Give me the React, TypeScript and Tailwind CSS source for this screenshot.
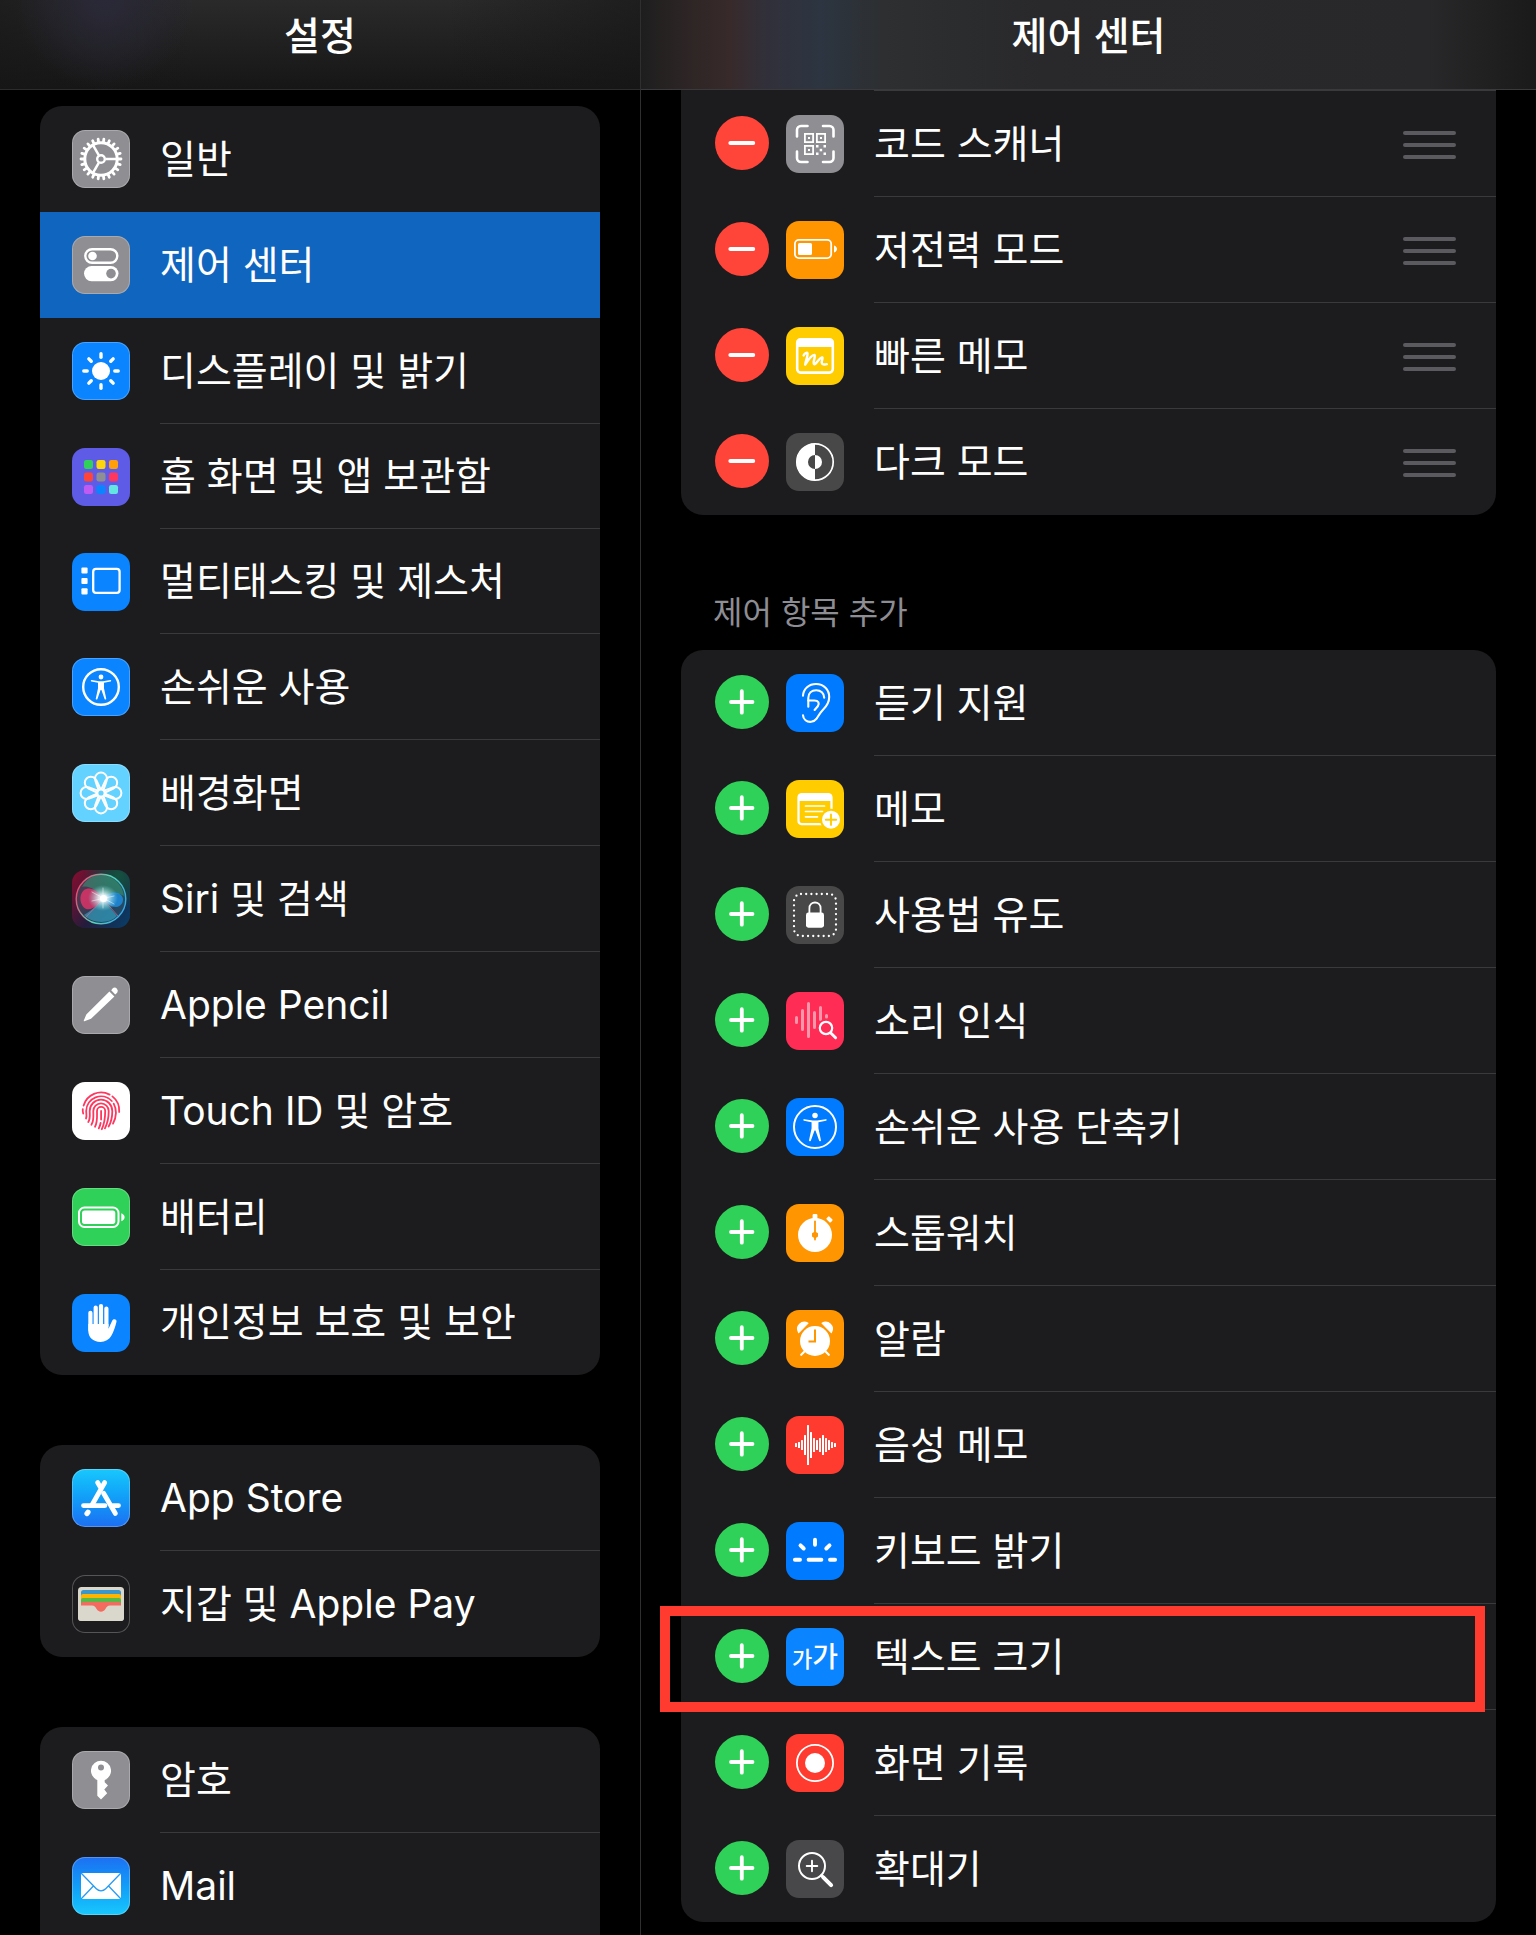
import type { ReactNode } from "react";
import clsx from "clsx";

type MenuItem = {
  label: string;
  icon: ReactNode;
  selected?: boolean;
  noDivider?: boolean;
  tight?: boolean;
};

type ControlItem = {
  label: string;
  icon: ReactNode;
  highlighted?: boolean;
};

// Every icon is a 58px rounded tile with a drawing on top
function Tile({ bg, rim, children }: { bg: string; rim?: boolean; children: ReactNode }) {
  return (
    <span className={clsx("block size-[58px] shrink-0 overflow-hidden rounded-[13px]", bg, rim && "inset-ring inset-ring-white/25")}>
      {children}
    </span>
  );
}

function Glyph({ children }: { children: ReactNode }) {
  return (
    <svg viewBox="0 0 58 58" className="size-full" fill="none" stroke="white" strokeLinecap="round" strokeLinejoin="round" aria-hidden="true">
      {children}
    </svg>
  );
}

const range = (n: number) => Array.from({ length: n }, (_, i) => i);

function GearGlyph() {
  return (
    <Glyph>
      <circle cx="29" cy="29" r="16.2" strokeWidth="3" />
      <circle cx="29" cy="29" r="3.8" strokeWidth="2.4" />
      {range(22).map((i) => (
        <path key={i} d="M46 29h3" strokeWidth="2.8" transform={`rotate(${(i * 360) / 22} 29 29)`} />
      ))}
      {[0, 120, 240].map((deg) => (
        <path key={deg} d="M33.5 29H45" strokeWidth="2.5" strokeLinecap="butt" transform={`rotate(${deg} 29 29)`} />
      ))}
    </Glyph>
  );
}

function TogglesGlyph() {
  return (
    <Glyph>
      <rect x="13.3" y="13.2" width="32" height="13.6" rx="6.8" strokeWidth="2.4" />
      <circle cx="20.5" cy="20" r="4.3" fill="white" stroke="none" />
      <rect x="12" y="30" width="34.5" height="15.2" rx="7.6" fill="white" stroke="none" />
      <circle cx="39" cy="37.6" r="4.8" fill="#8e8e93" stroke="none" />
    </Glyph>
  );
}

function SunGlyph() {
  return (
    <Glyph>
      <circle cx="29" cy="29" r="9" fill="white" stroke="none" />
      {range(8).map((i) => (
        <path key={i} d="M29 11.8v3.4" strokeWidth="3.4" transform={`rotate(${i * 45} 29 29)`} />
      ))}
    </Glyph>
  );
}

const gridColors = ["#30d158", "#ffd60a", "#ff9f0a", "#ff453a", "#8e8e93", "#ff375f", "#bf5af2", "#0a84ff", "#63e6e2"];

function HomeGridGlyph() {
  return (
    <Glyph>
      {gridColors.map((c, i) => (
        <rect key={c} x={12 + (i % 3) * 12.5} y={12 + Math.floor(i / 3) * 12.5} width="9" height="9" rx="2.2" fill={c} stroke="none" />
      ))}
    </Glyph>
  );
}

function MultitaskGlyph() {
  return (
    <Glyph>
      {[14.4, 24.9, 35.2].map((y) => (
        <rect key={y} x="9.4" y={y} width="6.2" height="6.2" rx="1" fill="white" stroke="none" />
      ))}
      <rect x="21.2" y="15.9" width="26.4" height="24" rx="2.8" strokeWidth="2.3" />
    </Glyph>
  );
}

function PersonGlyph({ big }: { big?: boolean }) {
  return (
    <Glyph>
      <circle cx="29" cy="29" r={big ? 21 : 17.8} strokeWidth={big ? 2 : 2.4} />
      <g transform={big ? "translate(29 29) scale(1.14) translate(-29 -29)" : undefined}>
        <circle cx="29" cy="19" r="2.4" fill="white" stroke="none" />
        <path
          d="M19.6 22.1 27 23.2h4l7.4-1.1a.7.7 0 0 1 .2 1.4l-6.6 1.3v5.4l2.2 10.2a.8.8 0 0 1-1.6.5L29.4 32h-.8l-3.2 8.9a.8.8 0 0 1-1.6-.5L26 30.2v-5.4l-6.6-1.3a.7.7 0 0 1 .2-1.4Z"
          fill="white"
          stroke="none"
        />
      </g>
    </Glyph>
  );
}

function FlowerGlyph() {
  return (
    <Glyph>
      {range(8).map((i) => (
        <path
          key={i}
          d="M26.4 25.6C25.6 22 23 18 23 14.6a6 6 0 0 1 12 0c0 3.4-2.6 7.4-3.4 11"
          strokeWidth="2"
          transform={`rotate(${i * 45} 29 29)`}
        />
      ))}
      <circle cx="29" cy="29" r="3.6" strokeWidth="2" />
    </Glyph>
  );
}

function SiriGlyph() {
  return (
    <Glyph>
      <defs>
        <linearGradient id="siriBack" x1="0" y1="0.2" x2="1" y2="0.8">
          <stop offset="0" stopColor="#7a0f30" />
          <stop offset="0.5" stopColor="#231c3c" />
          <stop offset="1" stopColor="#0b3a63" />
        </linearGradient>
        <radialGradient id="siriGreen" cx="0.8" cy="0.1" r="0.6">
          <stop offset="0" stopColor="#14523f" />
          <stop offset="1" stopColor="#14523f" stopOpacity="0" />
        </radialGradient>
        <linearGradient id="siriRing" x1="0" y1="0.3" x2="1" y2="0.7">
          <stop offset="0" stopColor="#f0486e" />
          <stop offset="0.5" stopColor="#57d5b4" />
          <stop offset="1" stopColor="#35a7e8" />
        </linearGradient>
        <radialGradient id="siriGlow">
          <stop offset="0" stopColor="#ffffff" />
          <stop offset="0.3" stopColor="#eafcff" stopOpacity="0.85" />
          <stop offset="1" stopColor="#7fe0e0" stopOpacity="0" />
        </radialGradient>
      </defs>
      <g stroke="none">
        <rect width="58" height="58" fill="url(#siriBack)" />
        <rect width="58" height="58" fill="url(#siriGreen)" />
        <circle cx="29" cy="29" r="24.5" fill="#3b6f7d" fillOpacity="0.4" />
        <path d="M29 5a24 24 0 0 1 23 21C44 21 36 25 31 28 26 21 17 15 10 17 14 9 21 5 29 5Z" fill="#3aa07a" fillOpacity="0.5" />
        <path d="M31 30C26 35 20 40 12 45 20 54 38 54 45 46 40 40 35 34 31 30Z" fill="#35b7d8" fillOpacity="0.55" />
        <path d="M31 29C26 20 18 16 12 20 6 25 8 36 14 39 21 41 26 34 31 29Z" fill="#f0336a" fillOpacity="0.75" />
        <path d="M31 29C36 22 45 20 50 26 53 31 49 37 44 37 38 37 34 32 31 29Z" fill="#1e8fe6" fillOpacity="0.8" />
      </g>
      <path d="M31 29 46 46M31 29 14 47" stroke="#d06a95" strokeOpacity="0.7" strokeWidth="1" />
      <circle cx="29" cy="29" r="24.8" stroke="url(#siriRing)" strokeWidth="1.4" />
      <ellipse cx="31" cy="28" rx="15" ry="13" fill="url(#siriGlow)" stroke="none" />
      <path d="M20 22 42 34M31 18v20M20 31l22-5" strokeWidth="0.7" strokeOpacity="0.7" />
      <circle cx="31.5" cy="28.5" r="3.6" fill="white" stroke="none" />
    </Glyph>
  );
}

function PencilGlyph() {
  return (
    <Glyph>
      <path d="M11 45.2c-.5.3-.8 0-.6-.6l2.5-6.2L36 15.5l5 4.9L17.6 42.8Z" fill="white" stroke="none" transform="translate(1.4 0)" />
      <path d="M39.2 14.2 41 12a3.3 3.3 0 0 1 4.2 4.8l-2 1.6Z" fill="white" stroke="none" />
    </Glyph>
  );
}

function FingerprintGlyph() {
  return (
    <Glyph>
      <g stroke="#ff375f" strokeWidth="1.8">
        <path d="M11.6 23.6A18.2 18.2 0 0 1 37.6 12.6" />
        <path d="M40.4 14.4A18.2 18.2 0 0 1 47.2 30" />
        <path d="M10.8 27.2c-.2 1.6 0 3 .4 4.4" />
        <path d="M14 36.5c1-2 .2-5.500.2-7.5a14.8 14.8 0 0 1 25.6-10" />
        <path d="M41.7 21.6c3 5.6 2.7 13.4-.7 20" />
        <path d="M16.3 40c2.2-3.4 1.4-7.5 1.4-11a11.3 11.3 0 0 1 22.6 0c0 6.5-1 11-3.7 15.500" />
        <path d="M19.4 42.7c2.8-4.2 1.9-9 1.9-13.7a7.7 7.7 0 0 1 15.4 0c0 7-1 12-3.8 17.3" />
        <path d="M23 44.8c2.7-4.8 2-10.8 2-15.8a4.1 4.1 0 0 1 8.2 0c0 6.5-.7 12.5-3.4 18.2" />
        <path d="M29.1 29v8.5M28.6 41c-.3 2-.9 3.7-1.800 5.4" />
      </g>
    </Glyph>
  );
}

function BatteryGlyph() {
  return (
    <Glyph>
      <rect x="7" y="19.5" width="39.5" height="19.5" rx="5.5" strokeWidth="2" />
      <rect x="10" y="22.6" width="33.3" height="13.3" rx="2.6" fill="white" stroke="none" />
      <path d="M49.3 25.3c4.4 1.6 4.4 6.4 0 8Z" fill="white" stroke="none" />
    </Glyph>
  );
}

function HandGlyph() {
  return (
    <Glyph>
      <path d="M18.4 18.8V36M23.7 13.5V32M29 12v20M34.4 14.5V32" strokeWidth="4.2" />
      <path
        d="M16.3 30h20.2v4.8c1.2-2.5 2.6-6 3.8-8.3 1.2-2.2 4.8-1.3 4.2 1.2-1 4.5-2.9 10-5.3 14.4-2.2 3.9-6 5.8-10.7 5.8-7.6 0-12.2-4.5-12.2-11.4Z"
        fill="white"
        stroke="none"
      />
    </Glyph>
  );
}

function AppStoreGlyph() {
  return (
    <Glyph>
      <g strokeWidth="4.8">
        <path d="M32.7 13.5 20 36" />
        <path d="M25.6 13.5 28 17.6" />
        <path d="M31.6 24.2 43.4 44.5" />
        <path d="M11.5 36.6H33M41 36.6h5.5" />
        <path d="M16 43.2 15 44.6" strokeWidth="5.2" />
      </g>
    </Glyph>
  );
}

function WalletGlyph() {
  return (
    <Glyph>
      <g stroke="none">
        <rect x="6" y="12" width="46" height="34" rx="3.5" fill="#dad7cc" />
        <path d="M9 17.5a2.5 2.5 0 0 1 2.5-2.5h35a2.5 2.5 0 0 1 2.5 2.5V34H9Z" fill="#3b97c9" />
        <path d="M9 21a2 2 0 0 1 2-2h36a2 2 0 0 1 2 2v13H9Z" fill="#ffb400" />
        <path d="M9 25a2 2 0 0 1 2-2h36a2 2 0 0 1 2 2v9H9Z" fill="#57b947" />
        <path d="M9 29a2 2 0 0 1 2-2h36a2 2 0 0 1 2 2v9H9Z" fill="#f26b5e" />
        <path d="M6 30.5h14c2.5 0 3.3 1.5 4.6 3.5 2.3 3.6 6.5 3.6 8.8 0 1.3-2 2.1-3.5 4.6-3.5h14v12a3.5 3.5 0 0 1-3.5 3.5h-39A3.5 3.5 0 0 1 6 42.5Z" fill="#dad7cc" />
      </g>
    </Glyph>
  );
}

function KeyGlyph() {
  return (
    <Glyph>
      <path
        d="M29 9.8a10 10 0 0 1 3.7 19.3v2.1l3.3 3.3-3.7 4 2.9 3.8-6.2 6.3-3.7-3.9V29.1A10 10 0 0 1 29 9.8Zm0 3.7a3 3 0 1 0 0 6 3 3 0 0 0 0-6Z"
        fill="white"
        fillRule="evenodd"
        stroke="none"
      />
    </Glyph>
  );
}

function MailGlyph() {
  return (
    <Glyph>
      <rect x="9" y="16" width="40" height="26" rx="1.5" fill="white" stroke="none" />
      <path d="M9.5 16.5 24.3 31.8c2.7 2.7 6.7 2.7 9.4 0L48.5 16.5M9.5 41.5 21.4 29M48.5 41.5 36.6 29" stroke="#2a9bf5" strokeWidth="1.3" />
    </Glyph>
  );
}

function QrGlyph() {
  return (
    <Glyph>
      <path d="M11 21.5V15a4 4 0 0 1 4-4h6.5M37 11h6.5a4 4 0 0 1 4 4v6.5M47.5 36.5V43a4 4 0 0 1-4 4H37M21.5 47H15a4 4 0 0 1-4-4v-6.5" strokeWidth="2.6" />
      {[[18, 18], [30, 18], [18, 30]].map(([x, y]) => (
        <g key={`${x}-${y}`}>
          <rect x={x + 0.9} y={y + 0.9} width="8.2" height="8.2" strokeWidth="1.8" strokeLinejoin="miter" />
          <rect x={x + 4} y={y + 4} width="2" height="2" fill="white" stroke="none" />
        </g>
      ))}
      {[[30, 30], [37.5, 30], [33.7, 33.8], [30, 37.5], [37.5, 37.5]].map(([x, y]) => (
        <rect key={`${x}-${y}`} x={x} y={y} width="2.5" height="2.5" fill="white" stroke="none" />
      ))}
    </Glyph>
  );
}

function LowPowerGlyph() {
  return (
    <Glyph>
      <rect x="8.9" y="18.9" width="36.3" height="18.2" rx="4" strokeWidth="1.8" />
      <rect x="12" y="22" width="14" height="12" rx="1.5" fill="white" stroke="none" />
      <path d="M48 24.5c4 1.2 4 5.8 0 7Z" fill="white" stroke="none" />
    </Glyph>
  );
}

function QuickNoteGlyph() {
  return (
    <Glyph>
      <rect x="11.2" y="12.2" width="35.6" height="33.4" rx="3.5" strokeWidth="2.6" />
      <path d="M11 13h36v7H11Z" fill="white" stroke="none" />
      <path
        d="M17.6 28.4c.8-1.8 3.8-4.2 4-1.8.1 3-2 7.400-2.400 11 2.500-4 6.600-10 9.200-9.600 1.800.5-1.800 6.800-.5 9 1.600 1.700 6-7.200 8.300-6.600 1.500.7-2 5 .2 6.500 1.300.8 2.900.7 4.400.3"
        strokeWidth="2.4"
      />
    </Glyph>
  );
}

function DarkModeGlyph() {
  return (
    <Glyph>
      <circle cx="29" cy="29" r="18.2" strokeWidth="1.7" />
      <path d="M29 10.5a18.5 18.5 0 0 0 0 37V36a7 7 0 0 1 0-14Z" fill="white" stroke="none" />
      <path d="M29 22a7 7 0 0 1 0 14Z" fill="white" stroke="none" />
    </Glyph>
  );
}

function EarGlyph() {
  return (
    <Glyph>
      <g strokeWidth="2.1">
        <path d="M17 21.8C17.4 14.6 23 10 30 10c7.7 0 13.2 5.4 13.2 13 0 5.5-2.7 9.3-6.2 12.7-3.2 3.2-4.5 6.3-6.4 9-2.7 3.7-8 4-11.1 1.5A6.5 6.5 0 0 1 17 41.3" />
        <path d="M38.2 23.8c0-4.6-3.5-7.6-8-7.6s-7.9 3-7.9 7.8v8.7" />
        <path d="M22.3 26.5h6c4.2 0 5.5 2.9 3.5 5.8L28.6 36" />
      </g>
    </Glyph>
  );
}

function MemoGlyph() {
  return (
    <Glyph>
      <rect x="12.5" y="14.2" width="33" height="30" rx="3.3" strokeWidth="2.3" />
      <path d="M12.5 14.5h33v6.4h-33Z" fill="white" stroke="none" />
      <path d="M19.5 26h19M19.5 31.5h17M19.5 36.8h12" strokeWidth="1.7" />
      <circle cx="45" cy="39.7" r="10" fill="white" stroke="#ffcc00" strokeWidth="2" />
      <path d="M45 34.5v10.4M39.8 39.7h10.4" stroke="#ffcc00" strokeWidth="1.9" />
    </Glyph>
  );
}

function LockGlyph() {
  return (
    <Glyph>
      <rect x="8" y="8" width="42" height="42" rx="7" strokeWidth="2.3" strokeDasharray="0 5.2" />
      <rect x="20" y="26.5" width="18" height="15.2" rx="2.4" fill="white" stroke="none" />
      <path d="M23.4 27v-4.5c0-8 11.2-8 11.2 0V27" strokeWidth="1.8" />
    </Glyph>
  );
}

function SoundGlyph() {
  return (
    <Glyph>
      <path d="M10.5 25.5v5M16.5 18.5v19M22.5 11.5v33M28.5 20.5v15M34.5 15.5v12M40.5 23.5v1.5" stroke="#ff96aa" strokeWidth="3" />
      <circle cx="40" cy="36" r="9" fill="#ff2d55" stroke="none" />
      <circle cx="40" cy="36" r="6.2" strokeWidth="2.2" />
      <path d="m44.8 41 4.8 4.8" strokeWidth="2.9" />
    </Glyph>
  );
}

function StopwatchGlyph() {
  return (
    <Glyph>
      <circle cx="29" cy="31" r="17" fill="white" stroke="none" />
      <rect x="26.6" y="10" width="4.8" height="6" rx="1" fill="white" stroke="none" />
      <rect x="40.6" y="13.4" width="5.8" height="4" rx="1" fill="white" stroke="none" transform="rotate(45 43.5 15.4)" />
      <path d="M29 17.5v18" stroke="#ff9500" strokeWidth="1.8" />
      <path d="m29 27.4 3 1.8v3.4l-3 2-3-2v-3.4Z" fill="#ff9500" stroke="none" />
    </Glyph>
  );
}

function AlarmGlyph() {
  return (
    <Glyph>
      <circle cx="29" cy="31" r="15" fill="white" stroke="none" />
      <path d="M12.7 22.6a6.8 6.8 0 0 1 9.3-9.4ZM45.3 22.6a6.8 6.8 0 0 0-9.3-9.4Z" fill="white" strokeWidth="1.2" />
      <path d="m15.2 44.8 4-4M42.8 44.8l-4-4" strokeWidth="2.2" />
      <path d="M29 19.5v12h-6.5" stroke="#ff9500" strokeWidth="2" strokeLinecap="butt" strokeLinejoin="miter" />
    </Glyph>
  );
}

const voiceBars = [4, 6, 10, 20, 40, 26, 14, 10, 14, 20, 14, 10, 6, 4];

function VoiceGlyph() {
  return (
    <Glyph>
      {voiceBars.map((h, i) => (
        <rect key={i} x={9 + i * 3} y={29 - h / 2} width="2" height={h} rx="0.5" fill="white" stroke="none" />
      ))}
    </Glyph>
  );
}

function KeyboardLightGlyph() {
  return (
    <Glyph>
      <path d="M8.9 37.7H14M22.6 37.7h12.8M44 37.7h5.1M29 17.8v5M14.5 23.3l3.2 3.2M43.5 23.3l-3.2 3.2" strokeWidth="3.9" />
    </Glyph>
  );
}

function TextSizeGlyph() {
  return (
    <span className="flex size-full items-baseline justify-center pt-1 leading-[50px] font-medium text-white" aria-hidden="true">
      <span className="text-[22px]">가</span>
      <span className="text-[28px]">가</span>
    </span>
  );
}

function RecordGlyph() {
  return (
    <Glyph>
      <circle cx="29" cy="29" r="18.1" strokeWidth="1.8" />
      <circle cx="29" cy="29" r="10" fill="white" stroke="none" />
    </Glyph>
  );
}

function MagnifierGlyph() {
  return (
    <Glyph>
      <circle cx="26" cy="26" r="13" strokeWidth="2" />
      <path d="M26 20.7v10.6M20.7 26h10.6" strokeWidth="1.9" />
      <path d="m35.5 35.5 1 1" strokeWidth="3" />
      <path d="m37.3 37.3 7.8 7.9" strokeWidth="4" />
    </Glyph>
  );
}

const menuGroups: MenuItem[][] = [
  [
    { label: "일반", icon: <Tile rim bg="bg-[#8e8e93]"><GearGlyph /></Tile>, noDivider: true },
    { label: "제어 센터", icon: <Tile rim bg="bg-[#8e8e93]"><TogglesGlyph /></Tile>, selected: true, noDivider: true },
    { label: "디스플레이 및 밝기", icon: <Tile rim bg="bg-[#0a84ff]"><SunGlyph /></Tile> },
    { label: "홈 화면 및 앱 보관함", icon: <Tile bg="bg-[#5e5ce6]"><HomeGridGlyph /></Tile>, tight: true },
    { label: "멀티태스킹 및 제스처", icon: <Tile bg="bg-[#0a84ff]"><MultitaskGlyph /></Tile>, tight: true },
    { label: "손쉬운 사용", icon: <Tile rim bg="bg-[#0a84ff]"><PersonGlyph /></Tile> },
    { label: "배경화면", icon: <Tile rim bg="bg-[#64d2ff]"><FlowerGlyph /></Tile> },
    { label: "Siri 및 검색", icon: <Tile bg="bg-[#231c3c]"><SiriGlyph /></Tile> },
    { label: "Apple Pencil", icon: <Tile rim bg="bg-[#8e8e93]"><PencilGlyph /></Tile> },
    { label: "Touch ID 및 암호", icon: <Tile bg="bg-white"><FingerprintGlyph /></Tile> },
    { label: "배터리", icon: <Tile rim bg="bg-[#30d158]"><BatteryGlyph /></Tile> },
    { label: "개인정보 보호 및 보안", icon: <Tile bg="bg-[#0a84ff]"><HandGlyph /></Tile>, tight: true, noDivider: true },
  ],
  [
    { label: "App Store", icon: <Tile rim bg="bg-linear-to-b from-[#1ac8fc] to-[#1d6ff2]"><AppStoreGlyph /></Tile> },
    { label: "지갑 및 Apple Pay", icon: <Tile rim bg="bg-[#1c1c1e]"><WalletGlyph /></Tile>, noDivider: true },
  ],
  [
    { label: "암호", icon: <Tile rim bg="bg-[#8e8e93]"><KeyGlyph /></Tile> },
    { label: "Mail", icon: <Tile rim bg="bg-linear-to-b from-[#1d6ff2] to-[#1ac8fc]"><MailGlyph /></Tile> },
  ],
];

const includedControls: ControlItem[] = [
  { label: "코드 스캐너", icon: <Tile bg="bg-[#8e8e93]"><QrGlyph /></Tile> },
  { label: "저전력 모드", icon: <Tile bg="bg-[#ff9500]"><LowPowerGlyph /></Tile> },
  { label: "빠른 메모", icon: <Tile bg="bg-[#ffcc00]"><QuickNoteGlyph /></Tile> },
  { label: "다크 모드", icon: <Tile bg="bg-[#484848]"><DarkModeGlyph /></Tile> },
];

const moreControls: ControlItem[] = [
  { label: "듣기 지원", icon: <Tile bg="bg-[#007aff]"><EarGlyph /></Tile> },
  { label: "메모", icon: <Tile bg="bg-[#ffcc00]"><MemoGlyph /></Tile> },
  { label: "사용법 유도", icon: <Tile bg="bg-[#484848]"><LockGlyph /></Tile> },
  { label: "소리 인식", icon: <Tile bg="bg-[#ff2d55]"><SoundGlyph /></Tile> },
  { label: "손쉬운 사용 단축키", icon: <Tile bg="bg-[#007aff]"><PersonGlyph big /></Tile> },
  { label: "스톱워치", icon: <Tile bg="bg-[#ff9500]"><StopwatchGlyph /></Tile> },
  { label: "알람", icon: <Tile bg="bg-[#ff9500]"><AlarmGlyph /></Tile> },
  { label: "음성 메모", icon: <Tile bg="bg-[#ff3b30]"><VoiceGlyph /></Tile> },
  { label: "키보드 밝기", icon: <Tile bg="bg-[#007aff]"><KeyboardLightGlyph /></Tile> },
  { label: "텍스트 크기", icon: <Tile bg="bg-[#0a84ff]"><TextSizeGlyph /></Tile>, highlighted: true },
  { label: "화면 기록", icon: <Tile bg="bg-[#ff3b30]"><RecordGlyph /></Tile> },
  { label: "확대기", icon: <Tile bg="bg-[#48484a]"><MagnifierGlyph /></Tile> },
];

function MenuRow({ item }: { item: MenuItem }) {
  return (
    <li>
      <a
        href="#"
        aria-current={item.selected ? "page" : undefined}
        className={clsx("flex pl-8", item.tight ? "h-[105px]" : "h-[106px]", item.selected && "bg-[#1065be]")}
      >
        <span className="pt-6">{item.icon}</span>
        <span
          className={clsx(
            "ml-[30px] flex flex-1 items-center border-b whitespace-nowrap",
            item.noDivider ? "border-transparent" : "border-[#3a3a3c]"
          )}
        >
          {item.label}
        </span>
      </a>
    </li>
  );
}

function ControlRow({ item, mode, last }: { item: ControlItem; mode: "add" | "remove"; last: boolean }) {
  const adding = mode === "add";
  return (
    <li className="relative flex h-[106px] items-center pl-[34px]">
      <button
        type="button"
        aria-label={`${item.label} ${adding ? "추가" : "제거"}`}
        className={clsx("mb-0.5 size-[54px] shrink-0 rounded-full", adding ? "bg-[#30d158]" : "bg-[#ff453a]")}
      >
        <svg viewBox="0 0 54 54" fill="none" stroke="white" strokeWidth="3.8" strokeLinecap="round" aria-hidden="true">
          <path d={adding ? "M16 27h21.500M26.800 16.200v21.500" : "M15.300 27h23"} />
        </svg>
      </button>
      <span className="ml-[17px]">{item.icon}</span>
      <span
        className={clsx(
          "ml-[30px] flex h-full flex-1 items-center justify-between border-b pr-10",
          last ? "border-transparent" : "border-[#3a3a3c]"
        )}
      >
        <span className="whitespace-nowrap">{item.label}</span>
        {!adding && (
          <button type="button" aria-label={`${item.label} 순서 변경`} className="mt-0.5 flex w-[53px] flex-col gap-2">
            <span className="h-1 rounded-full bg-[#5a5a5f]" />
            <span className="h-1 rounded-full bg-[#5a5a5f]" />
            <span className="h-1 rounded-full bg-[#5a5a5f]" />
          </button>
        )}
      </span>
      {item.highlighted && (
        <span className="pointer-events-none absolute top-[2px] right-[11px] left-[-21px] h-[106px] border-10 border-[#ff3b30]" />
      )}
    </li>
  );
}

export default function App() {
  return (
    <div className="flex h-screen overflow-hidden bg-black font-['Inter','Noto_Sans_CJK_KR',sans-serif] text-[39px] leading-[58px] text-white">
      {/* Menu */}
      <aside className="flex w-5/12 flex-col">
        <header className="flex h-[90px] shrink-0 justify-center border-b border-[#2c2c2e] bg-[radial-gradient(circle_at_105px_0px,#2a2938,transparent_90px),linear-gradient(to_right,#16161699,transparent_30%,transparent_70%,#16161699),linear-gradient(to_bottom,#2a2a2b,#161616)] pt-[7px]">
          <h1 className="font-medium">설정</h1>
        </header>
        <nav className="flex-1 space-y-[70px] overflow-y-auto px-10 pt-4 [scrollbar-width:none]">
          {menuGroups.map((group, i) => (
            <ul key={i} className="overflow-hidden rounded-[22px] bg-[#1c1c1e] last:rounded-b-none">
              {group.map((item) => (
                <MenuRow key={item.label} item={item} />
              ))}
            </ul>
          ))}
        </nav>
      </aside>

      {/* Control list */}
      <main className="flex flex-1 flex-col border-l border-[#2f2f31]">
        <header className="flex h-[90px] shrink-0 justify-center border-b border-[#3a3a3c] bg-[linear-gradient(to_right,#1e1e1e,#2d2525_5%,#382a2b_10%,#31303a_14%,#2c3541_20%,#2d2f31_27%,#29292b_45%,#28282a_88%,#1a1a1a)] pt-[7px]">
          <h2 className="font-medium">제어 센터</h2>
        </header>
        <div className="flex-1 overflow-y-auto px-10 [scrollbar-width:none]">
          <div className="rounded-b-[22px] bg-[#1c1c1e]">
            <div className="ml-[193px] h-px bg-[#3a3a3c]" />
            <ul>
              {includedControls.map((item, i) => (
                <ControlRow key={item.label} item={item} mode="remove" last={i === includedControls.length - 1} />
              ))}
            </ul>
          </div>
          <h3 className="px-8 pt-[74px] pb-[13px] text-[32px] leading-12 text-[#8d8d93]">제어 항목 추가</h3>
          <ul className="rounded-[22px] bg-[#1c1c1e]">
            {moreControls.map((item, i) => (
              <ControlRow key={item.label} item={item} mode="add" last={i === moreControls.length - 1} />
            ))}
          </ul>
        </div>
      </main>
    </div>
  );
}
